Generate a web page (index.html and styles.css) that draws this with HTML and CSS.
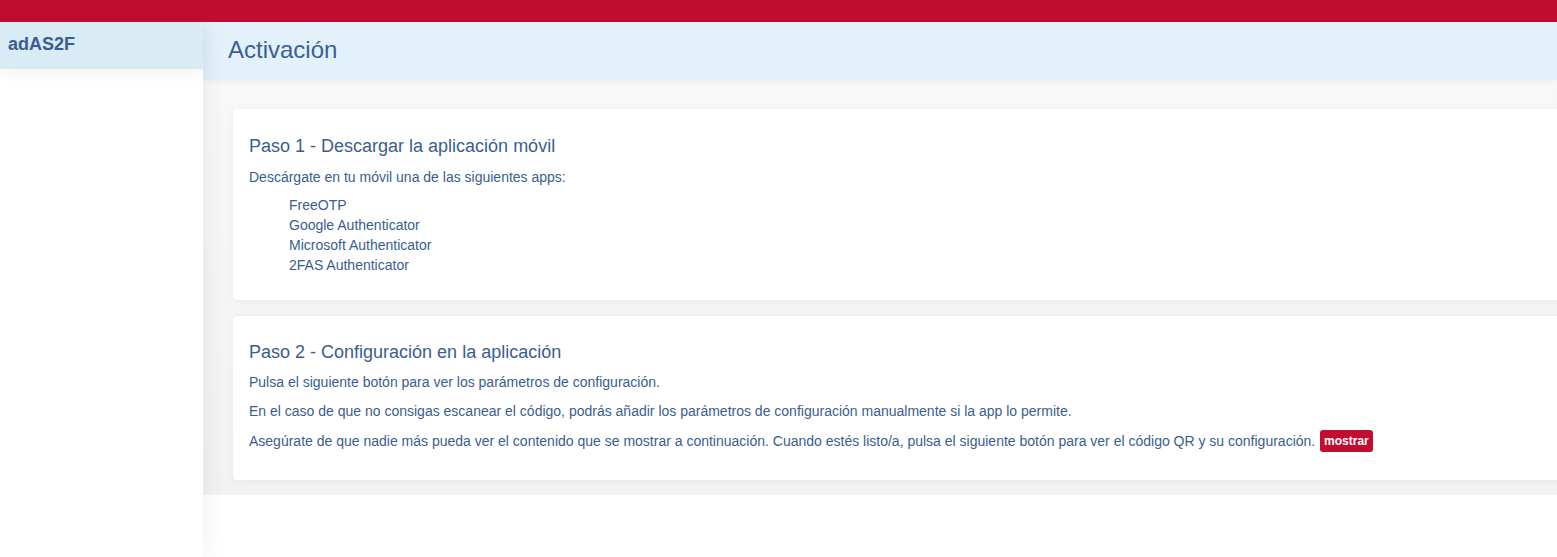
FILE: index.html
```html
<!DOCTYPE html>
<html lang="es">
<head>
<meta charset="utf-8">
<title>adAS2F - Activación</title>
<link rel="stylesheet" href="styles.css">
</head>
<body>
<div class="topbar"></div>
<div class="layout">
  <aside class="sidebar">
    <div class="brand">adAS2F</div>
  </aside>
  <main class="main">
    <header class="page-header">
      <h1 class="page-title">Activación</h1>
    </header>
    <section class="content">
      <div class="card card-apps">
        <h3 class="card-title">Paso 1 - Descargar la aplicación móvil</h3>
        <p class="card-text">Descárgate en tu móvil una de las siguientes apps:</p>
        <ul class="app-list">
          <li>FreeOTP</li>
          <li>Google Authenticator</li>
          <li>Microsoft Authenticator</li>
          <li>2FAS Authenticator</li>
        </ul>
      </div>
      <div class="card card-config">
        <h3 class="card-title">Paso 2 - Configuración en la aplicación</h3>
        <p class="card-text">Pulsa el siguiente botón para ver los parámetros de configuración.</p>
        <p class="card-text">En el caso de que no consigas escanear el código, podrás añadir los parámetros de configuración manualmente si la app lo permite.</p>
        <p class="card-text">Asegúrate de que nadie más pueda ver el contenido que se mostrar a continuación. Cuando estés listo/a, pulsa el siguiente botón para ver el código QR y su configuración. <button class="btn-show" type="button">mostrar</button></p>
      </div>
    </section>
  </main>
</div>
</body>
</html>
```

FILE: styles.css
```css
html, body {
  margin: 0;
  padding: 0;
  background: #ffffff;
  font-family: "Liberation Sans", Arial, sans-serif;
  color: #3a5d92;
  overflow: hidden;
}

.topbar {
  height: 22px;
  background: #c10e30;
}

.layout {
  display: flex;
  min-height: calc(100vh - 22px);
}

.sidebar {
  width: 203px;
  flex: 0 0 203px;
  background: #ffffff;
  position: relative;
  z-index: 2;
  box-shadow: 4px 0 22px rgba(0, 0, 0, 0.06);
}

.brand {
  height: 47px;
  box-sizing: border-box;
  padding: 12px 0 0 8px;
  background: #d9ebf4;
  font-size: 18px;
  font-weight: bold;
  line-height: 21px;
  color: #3a5d92;
  box-shadow: 0 4px 14px rgba(0, 0, 0, 0.05);
}

.main {
  flex: 1;
  min-width: 0;
  overflow: hidden;
}

.page-header {
  height: 58px;
  box-sizing: border-box;
  background: #e3f2fa;
  padding: 14px 0 0 25px;
  position: relative;
  z-index: 1;
  box-shadow: 0 2px 6px rgba(0, 0, 0, 0.04);
}

.page-title {
  margin: 0;
  font-size: 24px;
  font-weight: normal;
  line-height: 28px;
  color: #3b5f96;
}

.content {
  background: linear-gradient(#f8f8f8, #f2f2f2);
  padding: 29px 0 15px 30px;
  display: flex;
  flex-direction: column;
  gap: 16px;
}

.card {
  background: #ffffff;
  border-radius: 4px;
  margin-right: -10px;
  padding: 0 16px;
  box-shadow: 0 1px 8px rgba(0, 0, 0, 0.05);
}

.card-title {
  margin: 0;
  font-size: 18px;
  font-weight: normal;
  line-height: 20px;
  color: #3a5d92;
}

.card-text {
  margin: 0;
  font-size: 14px;
  line-height: 20px;
}

.card-apps {
  padding-top: 27px;
  padding-bottom: 25px;
}

.card-apps .card-title {
  margin-bottom: 11px;
}

.card-apps .card-text {
  margin-bottom: 8px;
}

.app-list {
  list-style: none;
  margin: 0;
  padding: 0 0 0 40px;
  font-size: 14px;
  line-height: 20px;
}

.card-config {
  padding-top: 26px;
  padding-bottom: 28px;
}

.card-config .card-title {
  margin-bottom: 10px;
}

.card-config .card-text + .card-text {
  margin-top: 9px;
}

.btn-show {
  display: inline-block;
  margin: 0 0 0 1px;
  padding: 0 4px;
  height: 22px;
  border: none;
  border-radius: 3px;
  background: #c10e30;
  color: #ffffff;
  font-family: "Liberation Sans", Arial, sans-serif;
  font-size: 12px;
  font-weight: bold;
  line-height: 22px;
  vertical-align: 1px;
  cursor: pointer;
}
```
